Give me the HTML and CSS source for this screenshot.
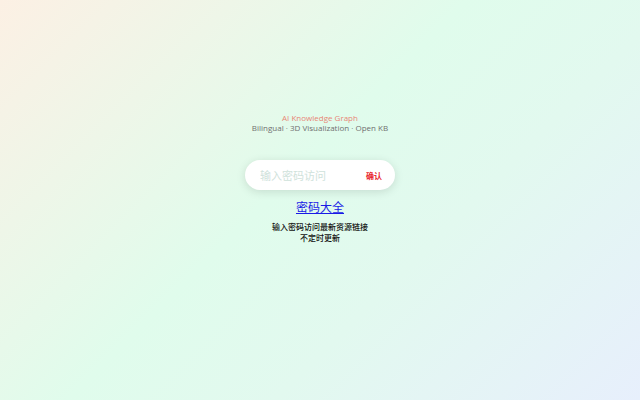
FILE: index.html
```html
<!DOCTYPE html>
<html lang="zh-CN">
<head>
<meta charset="utf-8">
<title>AI Knowledge Graph</title>
<link rel="stylesheet" href="styles.css">
</head>
<body>
<main class="page">
  <header class="hero">
    <div class="title">AI Knowledge Graph</div>
    <div class="subtitle">Bilingual · 3D Visualization · Open KB</div>
  </header>
  <form class="pill">
    <input class="pill-input" type="password" placeholder="输入密码访问">
    <button class="pill-btn" type="button">确认</button>
  </form>
  <a class="link" href="#">密码大全</a>
  <p class="note">输入密码访问最新资源链接<br>不定时更新</p>
</main>
</body>
</html>
```

FILE: styles.css
```css
html, body {
  margin: 0;
  height: 100%;
}
body {
  background: linear-gradient(135deg, #fcf0e4 0%, #e0fcec 45%, #e2f9ef 65%, #e7effc 100%);
  font-family: "Open Sans", "Noto Sans CJK SC", sans-serif;
}
.page {
  height: 400px;
  display: flex;
  flex-direction: column;
  align-items: center;
  padding-top: 113px;
  box-sizing: border-box;
}
.hero {
  text-align: center;
  line-height: 10px;
}
.title {
  font-size: 8px;
  color: #e88676;
}
.subtitle {
  font-size: 8px;
  color: #707070;
}
.pill {
  margin-top: 27px;
  width: 150px;
  height: 30px;
  background: #fff;
  border-radius: 15px;
  box-shadow: 0 2px 10px rgba(0, 0, 0, 0.12);
  display: flex;
  align-items: center;
  padding: 0 13px 0 15px;
  box-sizing: border-box;
}
.pill-input {
  flex: 1;
  min-width: 0;
  border: none;
  outline: none;
  background: transparent;
  font-family: "Noto Sans CJK SC", sans-serif;
  font-size: 11px;
  padding: 0;
}
.pill-input::placeholder {
  color: #cfe2db;
}
.pill-btn {
  border: none;
  background: transparent;
  color: #e8242c;
  font-family: "Noto Sans CJK SC", sans-serif;
  font-weight: 700;
  font-size: 8px;
  padding: 0;
}
.link {
  margin-top: 9px;
  font-family: "Noto Sans CJK SC", sans-serif;
  font-size: 12px;
  color: #1a1ae6;
  text-decoration: underline;
  line-height: 16px;
}
.note {
  margin: 6px 0 0;
  font-family: "Noto Sans CJK SC", sans-serif;
  font-weight: 500;
  font-size: 8px;
  line-height: 11px;
  text-align: center;
  color: #111;
}
```
